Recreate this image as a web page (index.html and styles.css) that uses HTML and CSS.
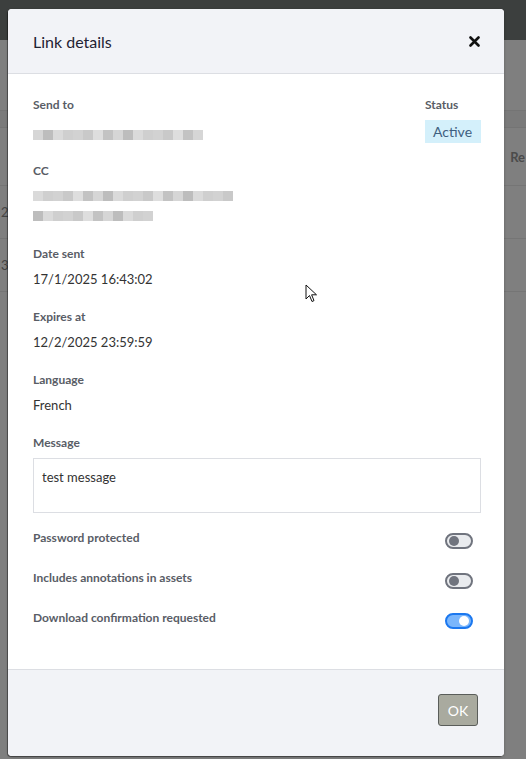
FILE: index.html
```html
<!DOCTYPE html>
<html lang="en">
<head>
    <meta charset="UTF-8">
    <meta name="viewport" content="width=device-width, initial-scale=1.0">
    <title>Link details</title>
    <link rel="stylesheet" href="styles.css">
</head>
<body>
    <!-- page behind the dimmed overlay -->
    <div class="page">
        <div class="topbar"></div>
        <div class="page-gap"></div>
        <div class="table-head"></div>
        <div class="table-row head-row"><span></span><span class="col-re">Re</span></div>
        <div class="table-row"><span class="cell-left">2:</span></div>
        <div class="table-row"><span class="cell-left">3:</span></div>
    </div>

    <div class="modal">
        <div class="modal-header">
            <h2>Link details</h2>
            <button class="close-btn" aria-label="Close">
                <svg width="11" height="11" viewBox="0 0 11 11"><path d="M1.5 1.5 L9.5 9.5 M9.5 1.5 L1.5 9.5" stroke="#111" stroke-width="2.6" stroke-linecap="round"/></svg>
            </button>
        </div>

        <div class="modal-body">
            <div class="field send-row">
                <div>
                    <div class="label">Send to</div>
                    <div class="blur-line" id="sendTo"></div>
                </div>
                <div class="status-col">
                    <div class="label">Status</div>
                    <span class="badge">Active</span>
                </div>
            </div>

            <div class="field">
                <div class="label">CC</div>
                <div class="cc-lines">
                    <div class="blur-line" id="cc1"></div>
                    <div class="blur-line" id="cc2"></div>
                </div>
            </div>

            <div class="field">
                <div class="label">Date sent</div>
                <div class="value">17/1/2025 16:43:02</div>
            </div>

            <div class="field">
                <div class="label">Expires at</div>
                <div class="value">12/2/2025 23:59:59</div>
            </div>

            <div class="field">
                <div class="label">Language</div>
                <div class="value">French</div>
            </div>

            <div class="field message-field">
                <div class="label">Message</div>
                <div class="message-box">test message</div>
            </div>

            <div class="switch-row">
                <div class="label">Password protected</div>
                <span class="switch"></span>
            </div>
            <div class="switch-row">
                <div class="label">Includes annotations in assets</div>
                <span class="switch"></span>
            </div>
            <div class="switch-row">
                <div class="label">Download confirmation requested</div>
                <span class="switch on"></span>
            </div>
        </div>

        <div class="modal-footer">
            <button class="ok-btn">OK</button>
        </div>
    </div>

    <svg class="cursor" width="13" height="19" viewBox="0 0 13 19">
        <path d="M1 1 L1 15 L4.5 11.5 L7 17.5 L9 16.6 L6.6 10.8 L11.5 10.8 Z" fill="#fff" stroke="#111" stroke-width="1" stroke-linejoin="round"/>
    </svg>

    <script>
        // redacted addresses, drawn as pixel blocks
        const shades = ["#cfcfcf", "#d6d6d6", "#c9c9c9", "#dadada", "#c3c3c3", "#d2d2d2", "#bdbdbd", "#dedede"];
        function pixelate(id, count, seed) {
            let el = document.getElementById(id);
            for (let i = 0; i < count; i++) {
                let b = document.createElement("span");
                b.className = "px";
                b.style.background = shades[(i * 5 + seed) % shades.length];
                el.appendChild(b);
            }
        }
        pixelate("sendTo", 17, 1);
        pixelate("cc1", 20, 3);
        pixelate("cc2", 12, 6);
    </script>
</body>
</html>
```

FILE: styles.css
```css
body {
    margin: 0;
    font-family: Lato, "Open Sans", sans-serif;
    background: #7f7f7f;
    height: 759px;
    overflow: hidden;
}

/* background page */
.topbar {
    height: 40px;
    background: #3c3f3e;
}

.page-gap {
    height: 70px;
    border-bottom: 1px solid #747474;
}

.table-head {
    height: 16px;
    background: #7a7a7a;
    border-bottom: 1px solid #747474;
}

.table-row {
    height: 57px;
    border-bottom: 1px solid #757575;
    display: flex;
    align-items: center;
    justify-content: space-between;
    font-size: 13px;
    color: #444;
}

.table-row + .table-row {
    height: 52px;
}

.head-row .col-re {
    font-weight: bold;
    color: #4b4b4b;
    margin-right: 1px;
}

.cell-left {
    margin-left: 1px;
}

/* modal */
.modal {
    position: absolute;
    left: 8px;
    top: 9px;
    width: 496px;
    height: 747px;
    background: #fff;
    border-radius: 4px;
    box-shadow: -1px 1px 0 rgba(0, 0, 0, 0.35), 0 1px 3px rgba(0, 0, 0, 0.25);
    display: flex;
    flex-direction: column;
    overflow: hidden;
}

.modal-header {
    height: 64px;
    background: #f2f3f7;
    border-bottom: 1px solid #dcdee3;
    display: flex;
    align-items: center;
    justify-content: space-between;
    padding: 0 24px 0 25px;
}

.modal-header h2 {
    margin: 0;
    font-size: 16px;
    font-weight: normal;
    color: #1f2233;
}

.close-btn {
    border: none;
    background: none;
    padding: 0;
    width: 11px;
    height: 11px;
    display: flex;
    cursor: pointer;
}

.modal-body {
    flex: 1;
    padding: 23px 23px 0 25px;
}

.field {
    margin-bottom: 20px;
}

.label {
    font-size: 12px;
    line-height: 16px;
    font-weight: bold;
    color: #595d66;
    margin-bottom: 7px;
}

.value {
    font-size: 13px;
    line-height: 20px;
    color: #333;
}

.send-row {
    display: flex;
    justify-content: space-between;
    margin-bottom: 18px;
}

.status-col {
    display: flex;
    flex-direction: column;
    align-items: flex-start;
}

.badge {
    background: #d4f0fb;
    color: #3f5f80;
    font-size: 14px;
    line-height: 23px;
    padding: 0 8px;
    width: 40px;
}

.blur-line {
    display: flex;
    height: 20px;
    align-items: center;
}

.px {
    width: 10px;
    height: 10px;
}

#sendTo {
    padding-top: 5px;
}

.message-box {
    border: 1px solid #dcdee3;
    padding: 4px 8px;
    box-sizing: border-box;
    height: 55px;
    font-size: 13px;
    line-height: 28px;
    color: #333;
}

.message-field {
    margin-bottom: 17px;
}

.switch-row {
    height: 40px;
    display: flex;
    justify-content: space-between;
    align-items: flex-start;
    padding-right: 8px;
}

.switch {
    margin-top: 3px;
    width: 28px;
    height: 16px;
    box-sizing: border-box;
    border: 2px solid #70747e;
    background: #e9ebee;
    border-radius: 8px;
    display: flex;
    align-items: center;
    padding: 0 2px;
}

.switch::after {
    content: "";
    width: 10px;
    height: 10px;
    border-radius: 50%;
    background: #70747e;
}

.switch.on {
    border-color: #1c78ef;
    background: #7ab6fc;
    justify-content: flex-end;
}

.switch.on::after {
    background: #fff;
}

.modal-footer {
    height: 87px;
    box-sizing: border-box;
    background: #f2f3f7;
    border-top: 1px solid #dcdee3;
    display: flex;
    justify-content: flex-end;
    align-items: flex-start;
    padding: 24px 26px 0 0;
}

.ok-btn {
    width: 40px;
    height: 32px;
    background: #a9aa9f;
    border: 1px solid #5a5d5a;
    border-radius: 3px;
    color: #fff;
    font-family: Lato, sans-serif;
    font-size: 14px;
    padding: 0;
}

.cursor {
    position: absolute;
    left: 305px;
    top: 284px;
}
```
